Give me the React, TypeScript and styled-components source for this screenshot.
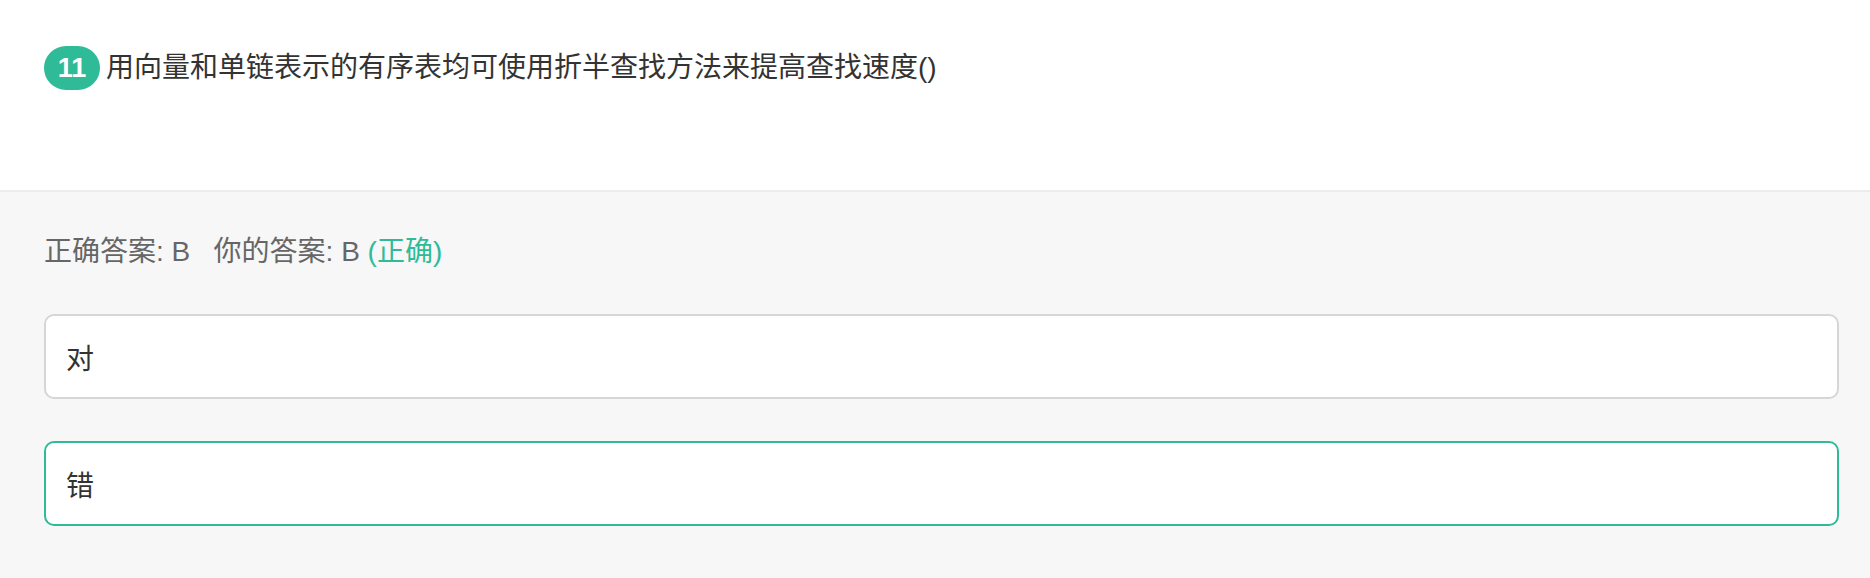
import React from "react";
import styled, { createGlobalStyle } from "styled-components";

const GREEN = "#2fbb98";

const GlobalStyle = createGlobalStyle`
  html, body {
    margin: 0;
    padding: 0;
    background: #f7f7f7;
  }
  body {
    font-family: "Liberation Sans", "Noto Sans CJK SC", sans-serif;
    color: #333;
  }
  * { box-sizing: border-box; }
`;

const Page = styled.div`
  display: flex;
  flex-direction: column;
  min-height: 578px;
`;

const QuestionSection = styled.section`
  background: #fff;
  height: 192px;
  padding: 46px 31px 0 44px;
  border-bottom: 2px solid #ececec;
`;

const QuestionRow = styled.div`
  display: flex;
  align-items: center;
  gap: 6px;
`;

const Badge = styled.span`
  display: inline-flex;
  align-items: center;
  justify-content: center;
  min-width: 56px;
  height: 44px;
  padding: 0 8px;
  border-radius: 22px;
  background: ${GREEN};
  color: #fff;
  font-size: 27px;
  font-weight: bold;
`;

const QuestionText = styled.span`
  font-size: 28px;
  line-height: 44px;
  color: #333;
`;

const AnswerSection = styled.section`
  display: flex;
  flex-direction: column;
  gap: 42px;
  padding: 40px 31px 0 44px;
`;

const ResultLine = styled.div`
  font-size: 28px;
  line-height: 40px;
  color: #666;
  white-space: pre;
`;

const Verdict = styled.span<{ $ok: boolean }>`
  color: ${(p) => (p.$ok ? GREEN : "#e0524a")};
`;

const Option = styled.div<{ $selected?: boolean }>`
  display: flex;
  align-items: center;
  height: 85px;
  padding: 0 20px;
  background: #fff;
  border: 2px solid ${(p) => (p.$selected ? GREEN : "#d6d6d6")};
  border-radius: 10px;
  font-size: 28px;
  color: #333;
`;

const options = [
  { key: "A", label: "对" },
  { key: "B", label: "错" },
];

export default function App() {
  const correct = "B";
  const mine = "B";
  return (
    <Page>
      <GlobalStyle />
      <QuestionSection>
        <QuestionRow>
          <Badge>11</Badge>
          <QuestionText>用向量和单链表示的有序表均可使用折半查找方法来提高查找速度()</QuestionText>
        </QuestionRow>
      </QuestionSection>
      <AnswerSection>
        <ResultLine>
          {`正确答案: ${correct}   你的答案: ${mine} `}
          <Verdict $ok={correct === mine}>(正确)</Verdict>
        </ResultLine>
        {options.map((o) => (
          <Option key={o.key} $selected={o.key === mine}>
            {o.label}
          </Option>
        ))}
      </AnswerSection>
    </Page>
  );
}
